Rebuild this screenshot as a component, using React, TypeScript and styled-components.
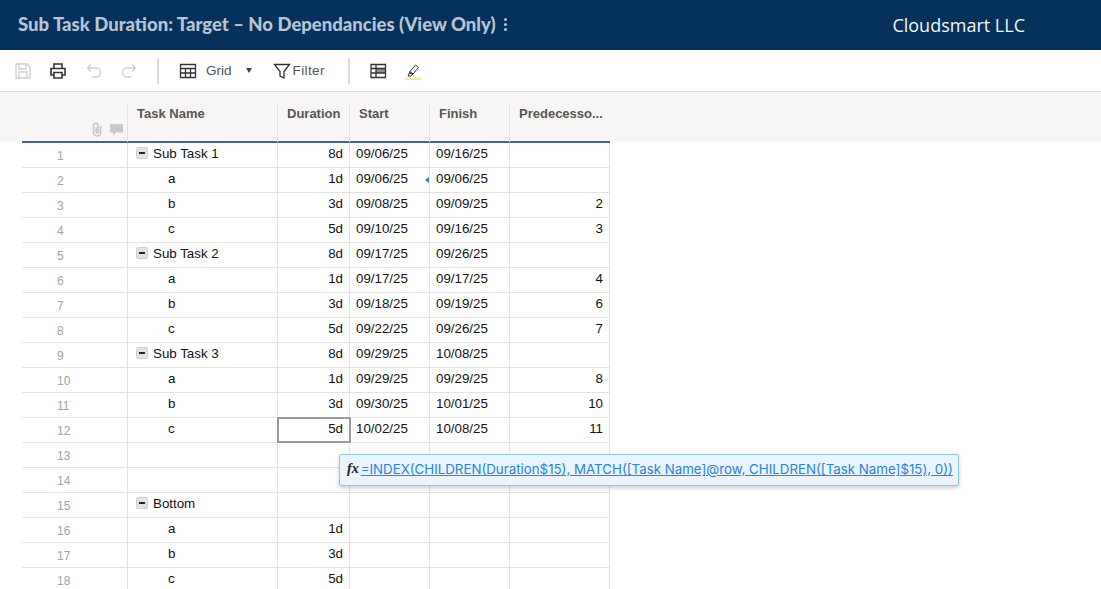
import React from 'react';
import styled, { createGlobalStyle } from 'styled-components';

const GlobalStyle = createGlobalStyle`
  html, body {
    margin: 0;
    padding: 0;
    height: 100%;
    overflow: hidden;
    background: #fff;
    font-family: "Liberation Sans", Arial, sans-serif;
  }
`;

const Page = styled.div`
  width: 1101px;
  height: 589px;
  overflow: hidden;
  display: flex;
  flex-direction: column;
`;

const TopBar = styled.header`
  height: 50px;
  flex: none;
  background: #05315a;
  display: flex;
  align-items: center;
  padding: 0 76px 0 18px;
  justify-content: space-between;
`;

const SheetTitle = styled.div`
  display: flex;
  align-items: center;
  gap: 8px;
  padding-bottom: 2px;
  font-family: Lato, sans-serif;
  font-weight: 900;
  font-size: 18.5px;
  color: #b7c4d1;
`;

const Kebab = styled.span`
  display: flex;
  flex-direction: column;
  gap: 2px;
  i {
    width: 3px;
    height: 3px;
    border-radius: 50%;
    background: #b7c4d1;
  }
`;

const Brand = styled.div`
  font-family: "Open Sans", sans-serif;
  font-size: 18px;
  font-weight: 500;
  color: #f2f5f8;
`;

const Toolbar = styled.div`
  height: 41px;
  flex: none;
  border-bottom: 1px solid #d9d7d3;
  display: flex;
  align-items: center;
  padding-left: 14px;
  color: #444;
  font-size: 13.5px;
`;

const ToolIcon = styled.svg<{ $ml?: number; $tone?: string }>`
  width: 18px;
  height: 18px;
  flex: none;
  margin-left: ${(p) => p.$ml ?? 0}px;
  fill: none;
  color: ${(p) => p.$tone ?? '#333'};
  stroke: currentColor;
  stroke-width: 1.3;
`;

const Divider = styled.span<{ $ml: number; $mr: number }>`
  width: 2px;
  height: 26px;
  background: #dcdcdc;
  margin: 0 ${(p) => p.$mr}px 0 ${(p) => p.$ml}px;
`;

const ToolLabel = styled.span<{ $ml: number; $wide?: boolean }>`
  margin-left: ${(p) => p.$ml}px;
  color: #555;
  letter-spacing: ${(p) => (p.$wide ? '0.4px' : '0')};
`;

const Caret = styled.span`
  width: 0;
  height: 0;
  margin: 0 21px 0 14px;
  border-left: 3.5px solid transparent;
  border-right: 3.5px solid transparent;
  border-top: 5px solid #444;
`;

const SheetArea = styled.div`
  flex: 1;
  position: relative;
  background: #fff;
`;

const HeaderBand = styled.div`
  height: 50px;
  background: #f7f6f4;
  padding-left: 22px;
  display: flex;
  box-sizing: border-box;
`;

const COLS = [106, 150, 72, 80, 80, 100];

const HeadCell = styled.div<{ $w: number }>`
  width: ${(p) => p.$w}px;
  box-sizing: border-box;
  flex: none;
  margin-top: 12px;
  padding: 2px 0 0 9px;
  border-right: 1px solid #e4e3e1;
  font-size: 13px;
  font-weight: 700;
  color: #555;
  position: relative;
  white-space: nowrap;
  &:last-child {
    border-right: 0;
  }
`;

const HeadIcons = styled.div`
  position: absolute;
  right: 4px;
  bottom: 5px;
  display: flex;
  gap: 6px;
  align-items: center;
`;

const Body = styled.div`
  width: 588px;
  margin-left: 22px;
  border-top: 2px solid #465f96;
  margin-top: -1px;
`;

const Row = styled.div`
  display: flex;
  height: 25px;
  box-sizing: border-box;
  border-bottom: 1px solid #e4e3e1;
`;

const Cell = styled.div<{ $w: number; $right?: boolean; $selected?: boolean }>`
  width: ${(p) => p.$w}px;
  flex: none;
  box-sizing: border-box;
  border-right: 1px solid #e4e3e1;
  display: flex;
  align-items: center;
  justify-content: ${(p) => (p.$right ? 'flex-end' : 'flex-start')};
  padding: 0 6px 4px 6px;
  font-size: 13.33px;
  color: #111;
  position: relative;
  ${(p) => p.$selected && 'outline: 2px solid #9a9a9a; outline-offset: -1px; z-index: 1;'}
`;

const RowNumber = styled(Cell)`
  justify-content: flex-start;
  padding: 2px 0 0 35px;
  color: #a3a3a3;
  font-size: 12px;
`;

const TaskCell = styled(Cell)<{ $child?: boolean }>`
  padding-left: ${(p) => (p.$child ? 40 : 8)}px;
`;

const Collapse = styled.span`
  width: 12px;
  height: 12px;
  margin-right: 5px;
  background: #e2e2e2;
  border-radius: 2px;
  border: 1px solid #d0d0d0;
  box-sizing: border-box;
  display: flex;
  align-items: center;
  justify-content: center;
  &::after {
    content: '';
    width: 6px;
    height: 2px;
    background: #222;
  }
`;

const Flag = styled.span`
  position: absolute;
  right: 0;
  top: 9px;
  width: 0;
  height: 0;
  border-top: 3px solid transparent;
  border-bottom: 3px solid transparent;
  border-right: 4px solid #2f80ed;
`;

const FormulaTip = styled.div`
  position: absolute;
  left: 339px;
  top: 362px;
  width: 620px;
  height: 32px;
  box-sizing: border-box;
  display: flex;
  align-items: center;
  gap: 2px;
  padding: 0 0 2px 7px;
  background: #e9f4fc;
  border: 1px solid #8ccaea;
  border-radius: 2px;
  box-shadow: 0 2px 4px rgba(0, 0, 0, 0.2);
  z-index: 5;
`;

const Fx = styled.span`
  font-family: "Liberation Serif", serif;
  font-style: italic;
  font-weight: 700;
  font-size: 14px;
  color: #222;
`;

const FormulaLink = styled.span`
  font-family: Inter, sans-serif;
  font-size: 13.3px;
  color: #2a82e4;
  text-decoration: underline;
  white-space: nowrap;
`;

type TaskRow = {
  name?: string;
  parent?: boolean;
  dur?: string;
  start?: string;
  finish?: string;
  pred?: string;
  flag?: boolean;
  selected?: boolean;
};

const rows: TaskRow[] = [
  { name: 'Sub Task 1', parent: true, dur: '8d', start: '09/06/25', finish: '09/16/25' },
  { name: 'a', dur: '1d', start: '09/06/25', finish: '09/06/25', flag: true },
  { name: 'b', dur: '3d', start: '09/08/25', finish: '09/09/25', pred: '2' },
  { name: 'c', dur: '5d', start: '09/10/25', finish: '09/16/25', pred: '3' },
  { name: 'Sub Task 2', parent: true, dur: '8d', start: '09/17/25', finish: '09/26/25' },
  { name: 'a', dur: '1d', start: '09/17/25', finish: '09/17/25', pred: '4' },
  { name: 'b', dur: '3d', start: '09/18/25', finish: '09/19/25', pred: '6' },
  { name: 'c', dur: '5d', start: '09/22/25', finish: '09/26/25', pred: '7' },
  { name: 'Sub Task 3', parent: true, dur: '8d', start: '09/29/25', finish: '10/08/25' },
  { name: 'a', dur: '1d', start: '09/29/25', finish: '09/29/25', pred: '8' },
  { name: 'b', dur: '3d', start: '09/30/25', finish: '10/01/25', pred: '10' },
  { name: 'c', dur: '5d', start: '10/02/25', finish: '10/08/25', pred: '11', selected: true },
  {},
  {},
  { name: 'Bottom', parent: true },
  { name: 'a', dur: '1d' },
  { name: 'b', dur: '3d' },
  { name: 'c', dur: '5d' },
];

const App: React.FC = () => {
  return (
    <Page>
      <GlobalStyle />
      <TopBar>
        <SheetTitle>
          Sub Task Duration: Target – No Dependancies (View Only)
          <Kebab>
            <i />
            <i />
            <i />
          </Kebab>
        </SheetTitle>
        <Brand>Cloudsmart LLC</Brand>
      </TopBar>

      <Toolbar>
        <ToolIcon viewBox="0 0 18 18" $tone="#cfcfcf">
          <path d="M2 2h11l3 3v11H2z" />
          <path d="M5 2v5h7V2M5 16v-6h8v6" />
        </ToolIcon>
        <ToolIcon viewBox="0 0 18 18" $ml={17}>
          <path strokeWidth="1.6" d="M5 6V2h8v4M5 13H2V6.5h14V13h-3" />
          <path strokeWidth="1.6" d="M5 10.5h8V16H5z" />
        </ToolIcon>
        <ToolIcon viewBox="0 0 18 18" $ml={18} $tone="#cfcfcf">
          <path d="M6 2.5L2.5 6 6 9.5M2.5 6H11a4.5 4.5 0 0 1 0 9H7" />
        </ToolIcon>
        <ToolIcon viewBox="0 0 18 18" $ml={17} $tone="#cfcfcf">
          <path d="M12 2.5L15.5 6 12 9.5M15.5 6H7a4.5 4.5 0 0 0 0 9h4" />
        </ToolIcon>
        <Divider $ml={19} $mr={20} />
        <ToolIcon viewBox="0 0 18 18">
          <path d="M1.5 2.5h15v13h-15zM1.500 6.500h15M1.500 11h15M6.500 6.500v9M11.500 6.500v9" />
        </ToolIcon>
        <ToolLabel $ml={9}>Grid</ToolLabel>
        <Caret />
        <ToolIcon viewBox="0 0 18 18">
          <path d="M1.500 2.500h15L11 9.500v6.500l-4-2V9.500z" />
        </ToolIcon>
        <ToolLabel $ml={2} $wide>
          Filter
        </ToolLabel>
        <Divider $ml={23} $mr={19} />
        <ToolIcon viewBox="0 0 18 18">
          <path fill="#8f8f8f" stroke="none" d="M7 6.500h9.500V11H7z" />
          <path d="M2 2.500h14.500v13H2zM2 6.500h14.500M2 11h14.500M7 2.500v13" />
        </ToolIcon>
        <ToolIcon viewBox="0 0 18 18" $ml={17}>
          <path strokeWidth="1" d="M6 9.500L11.500 3l3 2.500L9 12l-3-.5zM4 14l2-4.500 3 2.500-2.500 2z" />
          <rect x="1" y="15.500" width="16" height="2.500" fill="#fbe79c" stroke="none" />
        </ToolIcon>
      </Toolbar>

      <SheetArea>
        <HeaderBand>
          <HeadCell $w={COLS[0]}>
            <HeadIcons>
              <svg width="14" height="15" viewBox="0 0 14 15" fill="none" stroke="#c9c9c7" strokeWidth="1.6">
                <path d="M10.500 4v6.500a3.500 3.500 0 0 1-7 0V3.500a2.300 2.300 0 0 1 4.600 0v6.500a1 1 0 0 1-2 0V5" />
              </svg>
              <svg width="13" height="13" viewBox="0 0 13 13" fill="#c9c9c7">
                <path d="M0 1h13v8.500H6L3 12.500V9.500H0z" />
              </svg>
            </HeadIcons>
          </HeadCell>
          <HeadCell $w={COLS[1]}>Task Name</HeadCell>
          <HeadCell $w={COLS[2]}>Duration</HeadCell>
          <HeadCell $w={COLS[3]}>Start</HeadCell>
          <HeadCell $w={COLS[4]}>Finish</HeadCell>
          <HeadCell $w={COLS[5]}>Predecesso...</HeadCell>
        </HeaderBand>
        <Body>
          {rows.map((r, i) => (
            <Row key={i}>
              <RowNumber $w={COLS[0]}>{i + 1}</RowNumber>
              <TaskCell $w={COLS[1]} $child={!r.parent}>
                {r.parent && <Collapse />}
                {r.name}
              </TaskCell>
              <Cell $w={COLS[2]} $right $selected={r.selected}>
                {r.dur}
              </Cell>
              <Cell $w={COLS[3]}>
                {r.start}
                {r.flag && <Flag />}
              </Cell>
              <Cell $w={COLS[4]}>{r.finish}</Cell>
              <Cell $w={COLS[5]} $right>
                {r.pred}
              </Cell>
            </Row>
          ))}
        </Body>
        <FormulaTip>
          <Fx>fx</Fx>
          <FormulaLink>
            =INDEX(CHILDREN(Duration$15), MATCH([Task Name]@row, CHILDREN([Task Name]$15), 0))
          </FormulaLink>
        </FormulaTip>
      </SheetArea>
    </Page>
  );
};

export default App;
